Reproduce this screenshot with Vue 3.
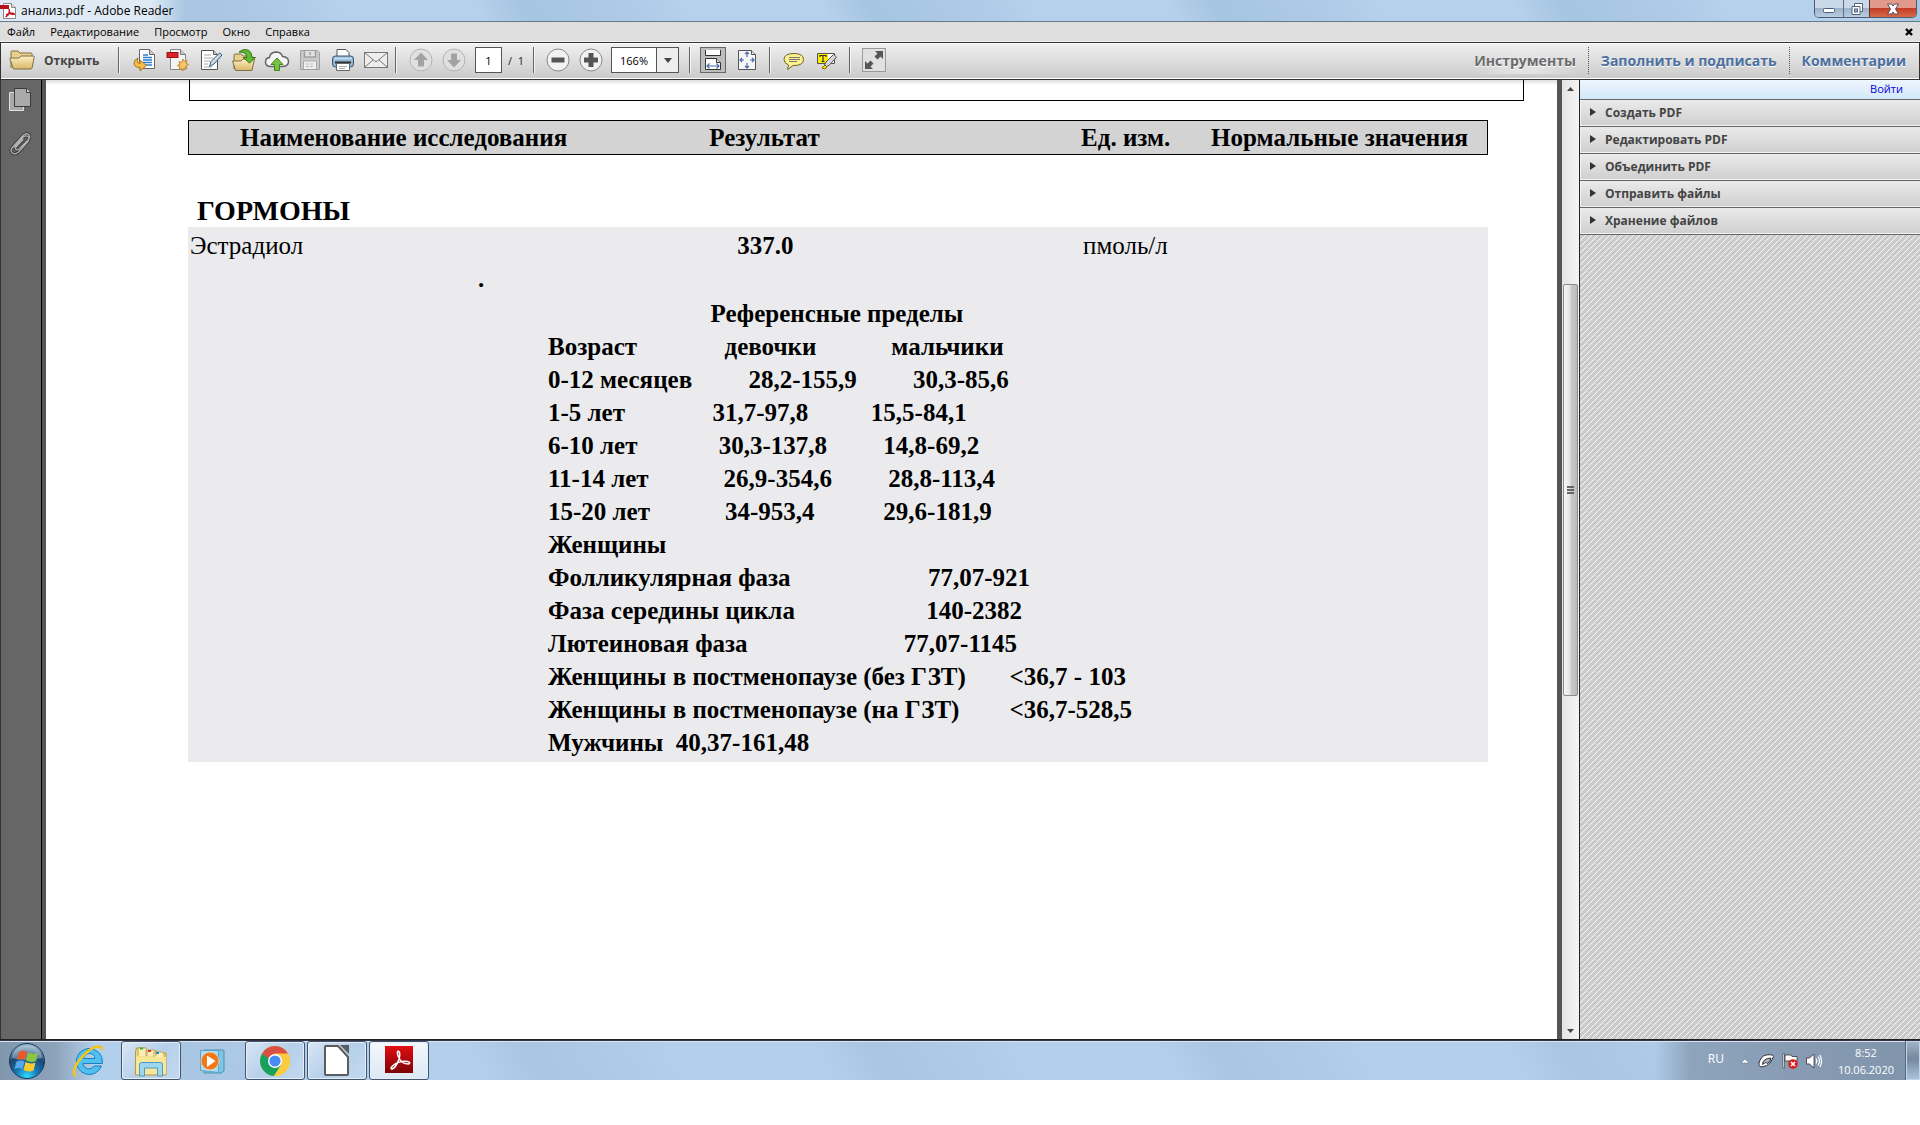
<script setup>
const menus = ['Файл', 'Редактирование', 'Просмотр', 'Окно', 'Справка']
const tools = ['Создать PDF', 'Редактировать PDF', 'Объединить PDF', 'Отправить файлы', 'Хранение файлов']
const sp = (n) => ' '.repeat(n)
const limits = [
  sp(26) + 'Референсные пределы',
  'Возраст' + sp(14) + 'девочки' + sp(12) + 'мальчики',
  '0-12 месяцев' + sp(9) + '28,2-155,9' + sp(9) + '30,3-85,6',
  '1-5 лет' + sp(14) + '31,7-97,8' + sp(10) + '15,5-84,1',
  '6-10 лет' + sp(13) + '30,3-137,8' + sp(9) + '14,8-69,2',
  '11-14 лет' + sp(12) + '26,9-354,6' + sp(9) + '28,8-113,4',
  '15-20 лет' + sp(12) + '34-953,4' + sp(11) + '29,6-181,9',
  'Женщины',
  'Фолликулярная фаза' + sp(22) + '77,07-921',
  'Фаза середины цикла' + sp(21) + '140-2382',
  'Лютеиновая фаза' + sp(25) + '77,07-1145',
  'Женщины в постменопаузе (без ГЗТ)' + sp(7) + '<36,7 - 103',
  'Женщины в постменопаузе (на ГЗТ)' + sp(8) + '<36,7-528,5',
  'Мужчины' + sp(2) + '40,37-161,48',
]
</script>

<template>
  <div class="desktop">
    <header class="titlebar">
      <svg class="title-icon" width="16" height="16" viewBox="0 0 16 16">
        <path d="M3.5.5h8l4 4v11h-12z" fill="#fff" stroke="#888" />
        <path d="M11.5.5v4h4" fill="#ddd" stroke="#888" />
        <path d="M0 2h9v4H0z" fill="#b5121b" />
        <path d="M9 6c1 3 0 6-3.500 8M9 8c1 3 3 4 6 3M6 12c2-1.500 5-2 8-1.500" fill="none" stroke="#c4161c" stroke-width="1.400" />
      </svg>
      <span class="title">анализ.pdf - Adobe Reader</span>
      <div class="winbtns">
        <button class="wb" aria-label="Свернуть">
          <svg width="14" height="12" viewBox="0 0 14 12"><rect x="1.500" y="5.500" width="11" height="4" rx="1" fill="#fff" stroke="#50607a" /></svg>
        </button>
        <button class="wb wb-mid" aria-label="Восстановить">
          <svg width="14" height="12" viewBox="0 0 14 12"><path d="M4.500.5h8v8h-2.500v3h-8v-8h2.500z" fill="#fff" stroke="#50607a" /><path d="M4.500 3.500h5.500v5" fill="none" stroke="#50607a" /><rect x="4.500" y="6" width="3" height="3" fill="#9db3cc" stroke="#50607a" /></svg>
        </button>
        <button class="wb wb-close" aria-label="Закрыть">
          <svg width="14" height="12" viewBox="0 0 14 12"><path d="M1.500 1h4L7 3l1.500-2h4L9.500 6l3 5h-4L7 9l-1.500 2h-4l3-5z" fill="#fff" stroke="#5a4a55" /></svg>
        </button>
      </div>
    </header>

    <nav class="menubar">
      <button v-for="m in menus" :key="m" class="menu">{{ m }}</button>
      <button class="doc-close" aria-label="Закрыть документ">
        <svg width="8" height="8" viewBox="0 0 8 8"><path d="M1 1l6 6M7 1L1 7" stroke="#000" stroke-width="2.400" /></svg>
      </button>
    </nav>

    <div class="toolbar">
      <button class="open">
        <svg width="26" height="22" viewBox="0 0 26 22">
          <defs><linearGradient id="fold" x1="0" y1="0" x2="0" y2="1"><stop offset="0" stop-color="#fdf0c4" /><stop offset="1" stop-color="#d9b767" /></linearGradient></defs>
          <path d="M2 19V3q0-1 1-1h6l2 2h11q1 0 1 1v13" fill="#e9cf8b" stroke="#7d704b" />
          <path d="M4.500 20L1 10.500Q.6 9 2 9h8l2-2h12q1.500 0 1.200 1.200L23 19q-.3 1-1.300 1z" fill="url(#fold)" stroke="#7d704b" />
        </svg>
        <span>Открыть</span>
      </button>
      <i class="sep"></i>
      <div class="group files">
        <button class="ib" aria-label="Экспорт"><svg width="24" height="24" viewBox="0 0 24 24"><path d="M6.500 1.500h10l5 5v14h-15z" fill="#fff" stroke="#666" /><path d="M16.500 1.500v5h5" fill="#ccc" stroke="#666" /><path d="M10 7h5M10 9.500h9M10 12h9M10 14.500h9M12 17h7" stroke="#2f7fd0" stroke-width="1.500" /><path d="M5 10Q1 12 1 15q0 4.500 6 4.500V23l6.500-5.500L7 12v3.500q-4-.5-2-5.500z" fill="#f3bd48" stroke="#a8731a" /></svg></button>
        <button class="ib" aria-label="Создать PDF"><svg width="24" height="24" viewBox="0 0 24 24"><path d="M4.500 1.500h10l5 5v15h-15z" fill="#f4f4f4" stroke="#888" /><path d="M14.500 1.500v5h5" fill="#ccc" stroke="#777" /><rect x="1" y="4.500" width="11" height="5" fill="#d8232a" stroke="#a31217" /><path d="M17 11l1.300 2.600 2.700-1.100-1 2.800 2.700 1.200-2.700 1.300 1 2.700-2.700-1L17 23l-1.300-2.500-2.700 1 1-2.700-2.700-1.300 2.700-1.200-1-2.800 2.700 1.100z" fill="#f4c56b" stroke="#c88a2c" /></svg></button>
        <button class="ib" aria-label="Подписать"><svg width="24" height="24" viewBox="0 0 24 24"><path d="M2.500 2.500h12l4 4v15h-16z" fill="#fff" stroke="#555" /><path d="M14.500 2.500v4h4" fill="#ccc" stroke="#555" /><path d="M5 7h7M5 10h9M5 13h6M5 16h4M5 19h8" stroke="#aaa" /><path d="M10.500 18.500l1.500-5 8.500-8.500 2.500 2-8 9z" fill="#c8dcea" stroke="#3f5568" /></svg></button>
        <button class="ib" aria-label="Открыть файл"><svg width="26" height="24" viewBox="0 0 26 24"><path d="M3 21V7q0-1 1-1h6l2 2h9v12" fill="#e9cf8b" stroke="#7d704b" /><path d="M4.500 22.500L1.500 13H10l2-2h11.500L21 22.500z" fill="url(#fold)" stroke="#7d704b" /><path d="M8 4Q13 0 18 2.500q3 2 3 7h3.500L18.500 15 12 9.500h4Q16 5 12 4.500q-2-.5-4-.5z" fill="#62b82f" stroke="#357a15" /></svg></button>
        <button class="ib" aria-label="Облако"><svg width="26" height="24" viewBox="0 0 26 24"><path d="M7 18.500Q1.500 18.500 1.500 14q0-4 4-4.500Q6 4.500 12 4q5 0 6.500 4.500 6 .5 6 5t-5.500 5z" fill="#f6f6f6" stroke="#666" stroke-width="1.500" /><path d="M13 10l6 6.500h-3.500v6h-5v-6H7z" fill="#7cc142" stroke="#3c8a1c" /></svg></button>
        <button class="ib" aria-label="Сохранить"><svg width="24" height="24" viewBox="0 0 24 24"><path d="M2.500 2.500h17l2 2v17h-19z" fill="#c9c9c9" stroke="#a0a0a0" /><path d="M6.500 3v6h11V3M12 4v3" fill="#e0e0e0" stroke="#a0a0a0" stroke-width="1.500" /><path d="M5.500 21v-8h13v8" fill="#eee" stroke="#aaa" /><path d="M8 16h8M8 18.500h8" stroke="#bbb" stroke-dasharray="3 1" /></svg></button>
        <button class="ib" aria-label="Печать"><svg width="24" height="24" viewBox="0 0 24 24"><path d="M6 9V1.500h9l3 3V9" fill="#fff" stroke="#555" /><rect x="1.500" y="8" width="21" height="11" rx="3" fill="#8fb3d3" stroke="#3e566d" /><path d="M4 14.500h16" stroke="#333" stroke-width="2" /><path d="M3 10.500h18" stroke="#c5dcef" stroke-width="2" /><path d="M5.500 15.500h13v7h-13z" fill="#fff" stroke="#666" /><path d="M8 18.500h8M8 20.500h6" stroke="#aaa" /></svg></button>
        <button class="ib" aria-label="Почта"><svg width="26" height="24" viewBox="0 0 26 24"><rect x="1.500" y="4.500" width="23" height="15" fill="#eee" stroke="#777" /><path d="M2 5l11 9 11-9M2 19l8-7M24 19l-8-7" fill="none" stroke="#777" /></svg></button>
      </div>
      <i class="sep"></i>
      <button class="ib round off" aria-label="Предыдущая"><svg width="24" height="24" viewBox="0 0 24 24"><circle cx="12" cy="12" r="11" fill="#e0e0e0" stroke="#b4b4b4" /><path d="M12 4.500l7 7.500h-4v6.500H9V12H5z" fill="#a3a3a3" /></svg></button>
      <button class="ib round off" aria-label="Следующая"><svg width="24" height="24" viewBox="0 0 24 24"><circle cx="12" cy="12" r="11" fill="#e0e0e0" stroke="#b4b4b4" /><path d="M12 19.500l7-7.500h-4V5.500H9V12H5z" fill="#a3a3a3" /></svg></button>
      <input class="page-no" value="1" aria-label="Номер страницы">
      <span class="of">/&nbsp; 1</span>
      <i class="sep"></i>
      <button class="ib round" aria-label="Уменьшить"><svg width="24" height="24" viewBox="0 0 24 24"><circle cx="12" cy="12" r="11" fill="#f2f2f2" stroke="#888" /><path d="M5.500 9.500h13v5h-13z" fill="#555" /></svg></button>
      <button class="ib round" aria-label="Увеличить"><svg width="24" height="24" viewBox="0 0 24 24"><circle cx="12" cy="12" r="11" fill="#f2f2f2" stroke="#888" /><path d="M9.500 5h5v4.500H19v5h-4.500V19h-5v-4.500H5v-5h4.500z" fill="#555" /></svg></button>
      <div class="zoom">
        <input value="166%" aria-label="Масштаб">
        <button aria-label="Список масштабов"><svg width="8" height="5" viewBox="0 0 8 5"><path d="M0 0h8L4 5z" fill="#444" /></svg></button>
      </div>
      <i class="sep"></i>
      <button class="ib pressed" aria-label="По ширине"><svg width="24" height="24" viewBox="0 0 24 24"><path d="M4.500 2v5.500h15V2" fill="#fff" stroke="#333" /><path d="M4.500 21.500v-11h11l4 4v7z" fill="#fff" stroke="#333" /><path d="M15.500 10.500v4h4" fill="#ddd" stroke="#333" /><path d="M6 18h12M8.500 15.500L6 18l2.500 2.500M15.500 15.500L18 18l-2.500 2.500" fill="none" stroke="#4a6aa8" stroke-width="1.200" /></svg></button>
      <button class="ib fit" aria-label="Вся страница"><svg width="24" height="24" viewBox="0 0 24 24"><path d="M3.500 2.500h13l4 4v15h-17z" fill="#f6f6f8" stroke="#555" /><path d="M16.500 2.500v4h4" fill="#ddd" stroke="#555" /><path d="M12 4v5M12 15v5M5 12h4M15 12h4M10 6l2-2 2 2M10 18l2 2 2-2M7 10l-2 2 2 2M17 10l2 2-2 2" fill="none" stroke="#4a6aa8" stroke-width="1.200" /></svg></button>
      <i class="sep"></i>
      <button class="ib note" aria-label="Заметка"><svg width="24" height="24" viewBox="0 0 24 24"><path d="M12 5.500q9.500 0 9.500 6T12 17.500l-1 0-5.500 4L6.500 17Q2 15 2 11.500q0-6 10-6z" fill="#fdf28c" stroke="#6a6530" /><path d="M7 9.500h11M7 11.500h11M7 13.500h8" stroke="#777" /></svg></button>
      <button class="ib mark" aria-label="Выделение"><svg width="24" height="24" viewBox="0 0 24 24"><path d="M2.500 5.500h17v10h-17z" fill="#fff" stroke="#555" /><path d="M3 6h10v9H3z" fill="#ffed00" /><path d="M5 9V7.500h6V9M8 7.500v6M6.500 13.500h3" fill="none" stroke="#333" stroke-width="1.200" /><path d="M9.500 17l1.500-3 7.500-7.500 3 2.500-7 8-3 1.500z" fill="#d8d8d8" stroke="#555" /><path d="M7 20l3-3 2 2-2 2z" fill="#ffe100" stroke="#776b00" /></svg></button>
      <i class="sep"></i>
      <button class="ib full" aria-label="Во весь экран"><svg width="24" height="24" viewBox="0 0 24 24"><rect x=".5" y=".5" width="23" height="23" fill="#e0e0e0" stroke="#999" /><path d="M13 3h8v8l-2.500-2.500-3 3-3-3 3-3zM11 21H3v-8l2.500 2.500 3-3 3 3-3 3z" fill="#555" /></svg></button>
      <div class="tabs">
        <button class="tab active">Инструменты</button>
        <button class="tab">Заполнить и подписать</button>
        <button class="tab">Комментарии</button>
      </div>
    </div>

    <div class="workspace">
      <aside class="rail">
        <button class="ib" aria-label="Миниатюры"><svg width="22" height="24" viewBox="0 0 22 24"><path d="M.5 4.500h14v18H.5z" fill="#a9a9a9" stroke="#e0e0e0" /><path d="M5.500.5h12l4 4v14h-16z" fill="#aaa" stroke="#3b3b3b" /><path d="M17.500.5v4h4" fill="#ddd" stroke="#3b3b3b" /></svg></button>
        <button class="ib" aria-label="Вложения"><svg width="22" height="24" viewBox="0 0 22 24"><g fill="none" stroke-linecap="round"><path d="M5 15L14.500 5Q17 3 19 4.500t0 5L9.500 20Q6 23 3.500 21T3 16L13 4.500q4-4 6.500-2t0 5L10 17Q8 18.500 7 17.500t0-2.500l7-7.500" stroke="#333" stroke-width="3" /><path d="M5 15L14.500 5Q17 3 19 4.500t0 5L9.500 20Q6 23 3.500 21T3 16L13 4.500q4-4 6.500-2t0 5L10 17Q8 18.500 7 17.500t0-2.500l7-7.500" stroke="#b0b0b0" stroke-width="1.400" /></g></svg></button>
      </aside>

      <main class="page">
        <div class="prev-box"></div>
        <table class="results">
          <colgroup><col class="c1"><col class="c2"><col class="c3"><col></colgroup>
          <thead>
            <tr>
              <th class="name">Наименование исследования</th>
              <th>Результат</th>
              <th>Ед. изм.</th>
              <th>Нормальные значения</th>
            </tr>
          </thead>
          <tbody>
            <tr><th class="section" colspan="4">ГОРМОНЫ</th></tr>
            <tr class="shade first">
              <td class="what">Эстрадиол</td>
              <td class="value">337.0</td>
              <td class="unit">пмоль/л</td>
              <td></td>
            </tr>
            <tr class="shade"><td class="dot" colspan="4">.</td></tr>
            <tr class="shade">
              <td class="limits" colspan="4">
                <div v-for="(line, i) in limits" :key="i" class="line">{{ line }}</div>
              </td>
            </tr>
          </tbody>
        </table>
      </main>

      <div class="scroll">
        <svg width="17" height="18" viewBox="0 0 17 18"><path d="M5 11h7L8.500 7z" fill="#444" /></svg>
        <div class="track">
          <div class="thumb"><i></i><i></i><i></i></div>
        </div>
        <svg width="17" height="18" viewBox="0 0 17 18"><path d="M5 8h7l-3.500 4z" fill="#444" /></svg>
      </div>

      <aside class="panel">
        <div class="signin"><a href="#">Войти</a></div>
        <button v-for="t in tools" :key="t" class="acc">
          <svg width="6" height="8" viewBox="0 0 6 8"><path d="M0 0l6 4-6 4z" fill="#333" /></svg>{{ t }}
        </button>
        <div class="hatch">
          <svg width="100%" height="100%">
            <defs>
              <pattern id="stripes" width="6" height="6" patternUnits="userSpaceOnUse">
                <path d="M0 5h1v1H0zM1 4h1v1H1zM2 3h1v1H2zM3 2h1v1H3zM4 1h1v1H4zM5 0h1v1H5z" fill="#fafafa" shape-rendering="crispEdges" />
              </pattern>
            </defs>
            <rect width="100%" height="100%" fill="url(#stripes)" />
          </svg>
        </div>
      </aside>
    </div>

    <footer class="taskbar">
      <button class="start" aria-label="Пуск">
        <svg width="38" height="38" viewBox="0 0 38 38">
          <defs>
            <radialGradient id="orb" cx=".5" cy=".95" r=".9"><stop offset="0" stop-color="#2fe0ff" /><stop offset=".35" stop-color="#1878b8" /><stop offset=".7" stop-color="#1c4670" /><stop offset="1" stop-color="#8fb0c8" /></radialGradient>
          </defs>
          <circle cx="19" cy="19" r="17.500" fill="url(#orb)" stroke="#16395c" />
          <path d="M4 16Q6 4 19 3.500 32 4 34 16 20 20 4 16z" fill="#fff" opacity=".3" />
          <path d="M11 10q4-2.500 8 0l-2 8q-4-2-8 0z" fill="#e8582a" />
          <path d="M20 10.500q4 2.500 10 .5l-2 8q-5 2-10-.5z" fill="#8cc63e" />
          <path d="M8.500 19.500q4-2 8 0l-2 7.500q-4-2-8 0z" fill="#55a8e8" />
          <path d="M17.500 20q5 2.500 10 .5l-2 8q-5 2-10-.5z" fill="#fcc92f" />
        </svg>
      </button>
      <button class="task" aria-label="Internet Explorer">
        <svg width="34" height="34" viewBox="0 0 34 34"><path d="M17 4.500A13 13 0 1 0 29.500 22H22q-4 5-9 1.500-2-1.500-2-4h19.500Q31 6 17 4.500zM11.500 14.500q1-5 6-5t5.500 5z" fill="#4fc0f0" stroke="#1b7fc0" /><path d="M4 32Q-1 29 6 18 14 7 23 3q7-2 7 3" fill="none" stroke="#f5c518" stroke-width="2.500" /></svg>
      </button>
      <button class="task open-app" aria-label="Проводник">
        <svg width="34" height="34" viewBox="0 0 34 34"><path d="M1.500 31V8l1-4h9l1 3h10l1 2h8.500v22z" fill="#f3dc86" stroke="#b89a45" /><path d="M4 12V4h8l1 3v5M12 12V6h9l1 3v3M20 13V8h9l1 3v3" fill="#fbeeb5" stroke="#c0a355" /><path d="M6 3.500h3v2H6z" fill="#2fae3c" /><path d="M14 6h3v2h-3z" fill="#d33" /><path d="M22 8h3v2h-3z" fill="#28c" /><path d="M2 13h30v17H2z" fill="#f8e69a" /><path d="M5.500 32V20.500q0-2 2-2h19q2 0 2 2V32h-5v-8h-13v8z" fill="#9fd6ee" stroke="#4b9cc4" /></svg>
      </button>
      <button class="task" aria-label="Проигрыватель">
        <svg width="34" height="34" viewBox="0 0 34 34"><path d="M8 6h19q1 0 1 1v20l-3 2H8z" fill="#7fc4e4" stroke="#4c93b8" /><path d="M4.500 6.500h18v22l-18-2z" fill="#a8daf0" stroke="#5ba3c6" /><circle cx="14" cy="17" r="9" fill="#f07818" stroke="#fff" stroke-width=".5" /><path d="M11 11.500l8.500 5.500-8.500 6z" fill="#fff" /></svg>
      </button>
      <button class="task open-app" aria-label="Chrome">
        <svg width="34" height="34" viewBox="0 0 34 34"><circle cx="17" cy="17" r="15" fill="#fbcb43" /><path d="M17 17L4 9.500A15 15 0 0 0 16 32l7-11z" fill="#18a05d" /><path d="M17 9.500h13A15 15 0 0 1 16 32l7.500-11.500z" fill="#fbcb43" /><path d="M4 9.500A15 15 0 0 1 30 9.500H17L10 14z" fill="#d94f43" /><circle cx="17" cy="17" r="7" fill="#fff" /><circle cx="17" cy="17" r="5.600" fill="#4a8af4" /></svg>
      </button>
      <button class="task open-app" aria-label="LibreOffice">
        <svg width="34" height="34" viewBox="0 0 34 34"><path d="M6 2h12l10 11v17q0 1-1 1H6q-1 0-1-1V3q0-1 1-1z" fill="#fff" stroke="#5c5c5c" stroke-width="2" /><path d="M20 1h9v9z" fill="#5c5c5c" /></svg>
      </button>
      <button class="task open-app current" aria-label="Adobe Reader">
        <svg width="34" height="34" viewBox="0 0 34 34"><defs><linearGradient id="acro" x1="0" y1="0" x2="0" y2="1"><stop offset="0" stop-color="#e40d12" /><stop offset="1" stop-color="#7c0205" /></linearGradient></defs><rect x="3" y="2" width="28" height="27" fill="url(#acro)" /><path d="M16 7q-1.500 1 .5 6 3 7 10 7 3-1.500-1-2.500-9-1-15.500 5-2 2.500 0 2.500Q14 24 17 15q2-7-1-8z" fill="none" stroke="#fff" stroke-width="1.500" /></svg>
      </button>
      <div class="tray">
        <span class="lang">RU</span>
        <button class="ti" aria-label="Скрытые значки"><svg width="10" height="6" viewBox="0 0 10 6"><path d="M1 5l4-4 4 4z" fill="#fff" stroke="#5d6d80" stroke-width=".5" /></svg></button>
        <button class="ti" aria-label="Сеть"><svg width="16" height="16" viewBox="0 0 16 16"><path d="M1 10Q3 3 8 2q7-1 7.500 1.500Q14 7 12 10q-3 3.500-9 4-3-1-2-4z" fill="#fff" stroke="#333" /><path d="M4.500 11.500q0-6 8.500-6.500-1 5-4 5.500-1-2-4.500 1z" fill="#9fb0c4" stroke="#333" /></svg></button>
        <button class="ti" aria-label="Центр поддержки"><svg width="16" height="16" viewBox="0 0 16 16"><path d="M1 .5h1.500V15H1z" fill="#fff" stroke="#333" stroke-width=".6" /><path d="M3 2h6l1 1.500h5V9H9L8 8H3z" fill="#fff" stroke="#333" stroke-width=".8" /><circle cx="11" cy="11" r="4.800" fill="#d8201c" /><path d="M9 9l4 4M13 9l-4 4" stroke="#fff" stroke-width="1.600" /></svg></button>
        <button class="ti" aria-label="Громкость"><svg width="16" height="16" viewBox="0 0 16 16"><path d="M.5 5h3L8 1v14l-4.500-4h-3z" fill="#fff" stroke="#333" stroke-width=".8" /><path d="M10 5.500q1.500 2.500 0 5M12 3.500q3 4.500 0 9M14 2q3 6 0 12" fill="none" stroke="#fff" stroke-width="1.200" /></svg></button>
        <time class="clock"><span>8:52</span><span>10.06.2020</span></time>
        <button class="peek" aria-label="Свернуть все окна"></button>
      </div>
    </footer>
  </div>
</template>

<style>
body { margin: 0; background: #fff; }
</style>

<style scoped>
.desktop { display: flex; flex-direction: column; min-height: calc(100vh - 45px); margin-bottom: 45px; font-family: "Open Sans", "Noto Sans", sans-serif; font-size: 11px; color: #000; }
.desktop * { box-sizing: border-box; }
button { border: 0; padding: 0; margin: 0; background: none; font: inherit; color: inherit; display: inline-flex; align-items: center; flex: none; }
input { font: inherit; border: 0; padding: 0; margin: 0; min-width: 0; }
svg { display: block; flex: none; }

.titlebar { display: flex; align-items: center; height: 22px; border-bottom: 1px solid #66788c; background: linear-gradient(90deg, #dfeaf4 0, #dfeaf4 150px, #a9c6e2 185px, transparent 260px), repeating-linear-gradient(60deg, #b5d1ec 0, #b5d1ec 120px, #a6c5e0 160px, #aecbe7 260px, #b5d1ec 300px); }
.title { margin-left: 5px; flex: 1; font-size: 12px; }
.winbtns { display: flex; align-self: flex-start; height: 18px; margin-right: 3px; border: 1px solid #4d5d70; border-top: 0; border-radius: 0 0 5px 5px; overflow: hidden; }
.wb { width: 28px; justify-content: center; background: linear-gradient(#c9d9e9 0 45%, #9db3ca 50%, #b8cde2); }
.wb-mid { width: 27px; border-left: 1px solid #5c6c80; border-right: 1px solid #5c3030; }
.wb-close { width: 46px; background: linear-gradient(#e0998a 0 45%, #c23e25 50%, #d9694a); }

.menubar { display: flex; align-items: center; height: 20px; padding: 0 7px; gap: 15px; background: #dedede; border-bottom: 1px solid #f3f3f3; }
.doc-close { margin-left: auto; }

.toolbar { display: flex; align-items: center; height: 38px; padding: 0 13px 2px 8px; border: 1px solid #333; box-shadow: inset 0 1px #fff, inset 0 -1px #fff; background: linear-gradient(#f0f0f0, #cacaca); color: #444; }
.open { gap: 9px; font-size: 12px; font-weight: bold; width: 109px; }
.sep { width: 2px; height: 26px; background: linear-gradient(90deg, #666 50%, #f4f4f4 50%); flex: none; }
.ib { justify-content: center; width: 33px; }
.files { display: flex; margin: 0 3px 0 8px; }
.files + .sep { margin-right: 7px; }
.page-no { width: 27px; height: 26px; border: 1px solid #555; margin-left: 5px; text-align: center; background: #fff; }
.of { width: 17px; margin: 0 8px 0 6px; color: #222; white-space: nowrap; }
.of + .sep { margin-right: 6px; }
.zoom { display: flex; width: 68px; height: 26px; margin: 0 10px 0 4px; border: 1px solid #555; flex: none; }
.zoom input { width: 44px; text-align: center; }
.zoom button { flex: 1; justify-content: center; border-left: 1px solid #555; background: #eee; }
.pressed { width: 26px; height: 26px; margin: 0 4px 0 9px; border: 1px solid #666; background: #bdbdbd; }
.fit { margin-right: 6px; }
.note { margin-left: 6px; }
.mark { margin-right: 6px; }
.full { margin-left: 6px; }
.tabs { display: flex; margin-left: auto; align-self: stretch; padding: 4px 0 3px; font-size: 14px; font-weight: bold; color: #4b6f9f; }
.tab { padding: 0 12px 1px; border-left: 1px dotted #555; text-shadow: 0 1px #fff; }
.tab:last-child { padding-right: 0; }
.tab.active { border-left: 0; color: #6b6b6b; background: radial-gradient(ellipse at 50% 120%, #fff8, transparent 60%); }

.workspace { display: flex; flex: 1; border-bottom: 1px solid #222; }
.rail { display: flex; flex-direction: column; align-items: center; gap: 20px; width: 46px; padding: 8px 7px 0 0; flex: none; background: linear-gradient(90deg, #333 0 1px, #666 1px 41px, #000 41px 42px, #555 42px); }
.page { flex: 1; min-width: 0; padding-left: 142px; background: linear-gradient(#ddd, #fff 5px); font-family: "Liberation Serif", "Times New Roman", serif; font-size: 25px; line-height: 33px; }
.prev-box { height: 21px; margin: 0 33px 19px 1px; border: 1px solid #000; border-top: 0; }
.results { width: calc(100% - 69px); table-layout: fixed; border-collapse: collapse; }
.results th, .results td { padding: 0; text-align: left; vertical-align: top; }
.c1 { width: 40.1%; }
.c2 { width: 28.6%; }
.c3 { width: 10%; }
.results thead tr { background: #d3d3d3; outline: 1px solid #000; outline-offset: -1px; }
.results thead th { height: 35px; padding-top: 1px; white-space: nowrap; }
.results thead .name { padding-left: 52px; }
.results .section { height: 72px; padding: 39px 0 0 9px; font-size: 28px; }
.shade { background: #ebebed; }
.first td { padding-top: 2px; }
.results .what { padding-left: 2px; }
.results .value { padding-left: 28px; font-weight: bold; }
.results .unit { padding-left: 2px; }
.results .dot { padding-left: 290px; font-weight: bold; }
.results .limits { padding: 2px 0 3px 360px; font-weight: bold; }
.line { white-space: pre; }

.scroll { display: flex; flex-direction: column; width: 23px; flex: none; padding-left: 5px; background: linear-gradient(90deg, #555 5px, #e4e4e4 5px, #f4f4f4 22px, #222 22px); }
.track { flex: 1; display: flex; flex-direction: column; }
.track::before { content: ""; flex: 186; }
.track::after { content: ""; flex: 326; }
.thumb { flex: 411; width: 15px; margin-left: 1px; display: flex; flex-direction: column; align-items: center; justify-content: center; gap: 1px; border: 1px solid #8b8b8b; border-radius: 2px; background: linear-gradient(90deg, #f6f6f6, #e4e4e6 45%, #c8c9cc 55%, #bbb); }
.thumb i { width: 7px; height: 2px; background: #666; }

.panel { display: flex; flex-direction: column; width: 340px; flex: none; }
.signin { height: 20px; padding-right: 17px; text-align: right; line-height: 18px; background: linear-gradient(#eef6fd, #d3e8f8); border-bottom: 1px solid #666; }
.signin a { color: #0000e0; text-decoration: none; }
.acc { height: 27px; padding: 0 0 2px 10px; gap: 9px; font-size: 12px; font-weight: bold; color: #444; background: linear-gradient(#eaeaea, #cfcfcf); border-bottom: 1px solid #666; box-shadow: inset 1px -1px #f2f2f2; }
.hatch { flex: 1; display: flex; background: #cbcbcb; }
.hatch svg { flex: 1; height: auto; }

.taskbar { display: flex; height: 40px; border-top: 1px solid #334; box-shadow: inset 0 1px #d9e6f2; background: linear-gradient(90deg, #8097ae 0, #8ca3ba 55px, transparent 95px), linear-gradient(270deg, #7f93aa 0, #8ea4bc 230px, transparent 265px), repeating-linear-gradient(60deg, #b2cfeb 0, #b2cfeb 120px, #a8c6e2 170px, #aecbe7 260px, #b2cfeb 300px); }
.start { width: 54px; justify-content: center; }
.task { width: 60px; margin-right: 2px; justify-content: center; border: 1px solid transparent; border-radius: 3px; }
.start + .task { margin: 0 2px 0 5px; }
.task.open-app { border-color: #44546a; background: linear-gradient(135deg, #d8e6f4, #b6d0ea 50%, #c2d9f0); box-shadow: inset 0 0 0 1px #e4eef8; }
.task.current { background: linear-gradient(#f4f8fc, #dce8f4); }
.tray { display: flex; align-items: center; margin-left: auto; color: #fff; gap: 8px; }
.lang { padding: 0 8px 5px 0; font-size: 12px; }
.clock { display: flex; flex-direction: column; align-items: center; line-height: 17px; margin-left: 8px; }
.peek { width: 14px; align-self: stretch; margin-left: 4px; border: 1px solid #c5d5e6; background: linear-gradient(#9fb2c6, #74889e 45%, #a8c2dd); box-shadow: -1px 0 #56687c; }
</style>
